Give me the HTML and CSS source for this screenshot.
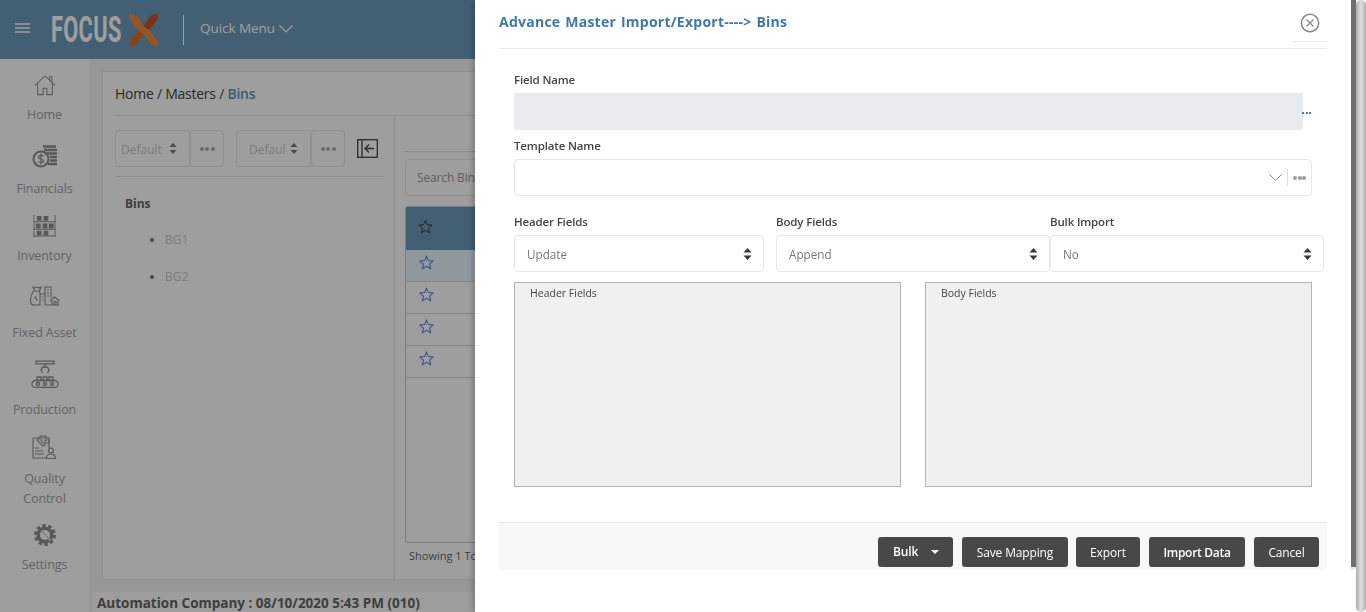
FILE: index.html
```html
<!DOCTYPE html>
<html lang="en">
<head>
<meta charset="utf-8">
<title>Advance Master Import/Export</title>
<link rel="stylesheet" href="styles.css">
</head>
<body>
<div class="app">
  <header class="topbar">
    <svg class="burger" width="15" height="10" viewBox="0 0 15 10"><path d="M0 1h15M0 5h15M0 9h15" stroke="#fff" stroke-width="1.500"/></svg>
    <div class="logo">
      <span class="logo-text">FOCUS</span>
      <svg width="29" height="34" viewBox="0 0 29 34"><path d="M0 0l8 3 6.500 10L21 3l8-3v6l-9 11 9 11v6l-8-3-6.500-10L8 31l-8 3v-6l9-11L0 6z" fill="#f08a3c"/><path d="M21 3l8-3v6l-9 11-5.500-4z" fill="#c0522c"/><path d="M8 31l-8 3v-6l9-11 5.500 4z" fill="#d2702f"/></svg>
    </div>
    <span class="top-sep"></span>
    <span class="quick">Quick Menu</span>
    <svg class="quick-chev" width="14" height="8" viewBox="0 0 14 8"><path d="M.5.500L7 7l6.500-6.500" fill="none" stroke="#fff" stroke-width="1.200"/></svg>
  </header>
  <div class="workspace">
    <nav class="sidenav">
      <a class="nav-item">
        <svg class="nav-icon" width="22" height="22" viewBox="0 0 24 23" fill="none" stroke="currentColor" stroke-width="1.100"><path d="M1 12L12 1.500 23 12M4 9.500V22h6v-7h4v7h6V9.500M17 6V2.500h2.500v6"/></svg>
        <span>Home</span>
      </a>
      <a class="nav-item gap-10">
        <svg class="nav-icon" width="26" height="23" viewBox="0 0 26 23" fill="none" stroke="currentColor"><circle cx="9" cy="14" r="7.500" stroke-width="2"/><path d="M11.500 11.500c-1-1.500-5-1.500-5 .7 0 2.500 5 1.300 5 3.700 0 2.200-4 2.200-5 .6M9 8.500v11" stroke-width="1.300"/><path d="M11 1.500h13M12 5h13M14 8.500h11M18 12h7M18 15.500h7M16 19h9" stroke-width="2.300"/></svg>
        <span>Financials</span>
      </a>
      <a class="nav-item">
        <svg class="nav-icon" width="23" height="22" viewBox="0 0 24 23" fill="currentColor"><path d="M.5 0h1v23h-1zM22.500 0h1v23h-1zM1 6.500h22v1H1zM1 14.500h22v1H1zM1 21.500h22v1H1z"/><path d="M4 1h5v5H4zM11 1h5v5h-5zM3 9h5v5H3zM10 9h5v5h-5zM16.500 9h5v5h-5zM4 16.500h5v5H4zM11 16.500h5v5h-5z"/></svg>
        <span>Inventory</span>
      </a>
      <a class="nav-item gap-16">
        <svg class="nav-icon" width="30" height="20" viewBox="0 0 30 20" fill="none" stroke="currentColor" stroke-width="1.100"><path d="M3 1l2 1 2-1 2 1 2-1-1.500 4h-5zM3.500 5C1.500 8 .5 12 .5 15c0 3 2 4 4 4H10V8L9.500 5M10 19V8h5v11M15 19V1h6v11M12 11h1.500M12 14h1.500M17 4h2M17 7h2M17 10h2M20 15l4.500-4 5 4M22 15v4h6v-4M24 15.500h2v3.500h-2zM15 19h14M6 10.500c-1.500 0-1.500 2 0 2s1.500 2 0 2"/></svg>
        <span>Fixed Asset</span>
      </a>
      <a class="nav-item gap-11">
        <svg class="nav-icon" width="28" height="28" viewBox="0 0 28 28" fill="none" stroke="currentColor" stroke-width="1.300"><path d="M5 1.200h18v2.600H5zM14 4v3M11.500 7h5M11.500 7l-1.500 3 1.500 3M16.500 7l1.500 3-1.500 3"/><path d="M6 17h4v3.500H6zM12 17h4v3.500h-4zM18 17h4v3.500h-4z"/><rect x="1" y="20.500" width="26" height="7" rx="3.500"/><circle cx="7" cy="24" r="1.500"/><circle cx="14" cy="24" r="1.500"/><circle cx="21" cy="24" r="1.500"/></svg>
        <span>Production</span>
      </a>
      <a class="nav-item">
        <svg class="nav-icon" width="25" height="25" viewBox="0 0 25 25" fill="none" stroke="currentColor" stroke-width="1.100"><path d="M5 3h3V1h6v2h3v10M8 3h6M1 3h4M1 3v20h14"/><path d="M3 16h8M3 19h9M3 13h4M5 5l6 6 2-1-6-7z"/><path d="M13 5h4v3h-4z"/><circle cx="19" cy="15.500" r="2.500"/><path d="M14.500 23.500c0-3 2-4.500 4.500-4.500s4.500 1.500 4.500 4.500z"/></svg>
        <span>Quality<br>Control</span>
      </a>
      <a class="nav-item">
        <svg class="nav-icon" width="22" height="22" viewBox="0 0 22 22" fill="none" stroke="currentColor"><circle cx="11" cy="11" r="9.500" stroke-width="3" stroke-dasharray="3.400 2.570"/><circle cx="11" cy="11" r="6.800" stroke-width="3.600"/><path d="M7.500 6.500l9 10" stroke="#fff" stroke-width="2"/><path d="M7.500 6.500l9 10" stroke-width=".8"/></svg>
        <span>Settings</span>
      </a>
    </nav>
    <main class="main">
      <section class="card">
        <div class="crumbs">Home / Masters / <b class="crumb-now">Bins</b></div>
        <div class="split">
          <aside class="tree-pane">
            <div class="tree-tools">
              <div class="tool-select wide"><span>Default</span><svg width="8" height="11" viewBox="0 0 8 11"><path d="M4 0l3.500 4H.5zM4 11L.5 7h7z" fill="#7a7a7a"/></svg></div>
              <div class="tool-dots"><i></i><i></i><i></i></div>
              <div class="tool-select second"><span>Defaul</span><svg width="8" height="11" viewBox="0 0 8 11"><path d="M4 0l3.500 4H.5zM4 11L.5 7h7z" fill="#7a7a7a"/></svg></div>
              <div class="tool-dots"><i></i><i></i><i></i></div>
              <svg class="collapse" width="21" height="19" viewBox="0 0 21 19" fill="none" stroke="#444" stroke-width="1.300"><rect x=".7" y=".7" width="19.600" height="17.600"/><path d="M5 1v17"/><path d="M17 9.500H8M12 5.500l-4 4 4 4"/></svg>
            </div>
            <h3 class="tree-title">Bins</h3>
            <ul class="tree-list"><li>BG1</li><li>BG2</li></ul>
          </aside>
          <div class="list-pane">
            <div class="search">Search Bins</div>
            <div class="grid">
              <div class="grid-head"><svg width="15" height="15" viewBox="0 0 24 24"><path d="M12 2l3 7 7.500.7-5.700 5 1.700 7.300-6.500-3.900L5.500 22l1.700-7.300-5.700-5L9 9z" fill="none" stroke="#333" stroke-width="1.500"/></svg></div>
              <div class="grid-row selected"><svg width="15" height="15" viewBox="0 0 24 24"><path d="M12 2l3 7 7.500.7-5.700 5 1.700 7.300-6.500-3.900L5.500 22l1.700-7.300-5.700-5L9 9z" fill="none" stroke="#5d80e8" stroke-width="1.700"/></svg></div>
              <div class="grid-row"><svg width="15" height="15" viewBox="0 0 24 24"><path d="M12 2l3 7 7.500.7-5.700 5 1.700 7.300-6.500-3.900L5.500 22l1.700-7.300-5.700-5L9 9z" fill="none" stroke="#5d80e8" stroke-width="1.700"/></svg></div>
              <div class="grid-row"><svg width="15" height="15" viewBox="0 0 24 24"><path d="M12 2l3 7 7.500.7-5.700 5 1.700 7.300-6.500-3.900L5.500 22l1.700-7.300-5.700-5L9 9z" fill="none" stroke="#5d80e8" stroke-width="1.700"/></svg></div>
              <div class="grid-row"><svg width="15" height="15" viewBox="0 0 24 24"><path d="M12 2l3 7 7.500.7-5.700 5 1.700 7.300-6.500-3.900L5.500 22l1.700-7.300-5.700-5L9 9z" fill="none" stroke="#5d80e8" stroke-width="1.700"/></svg></div>
            </div>
            <div class="showing">Showing 1 To 4 of 4</div>
          </div>
        </div>
      </section>
      <footer class="status">Automation Company : 08/10/2020 5:43 PM (010)</footer>
    </main>
  </div>
</div>

<div class="backdrop"></div>

<aside class="modal">
  <div class="modal-content">
    <div class="modal-head">
      <h2 class="modal-title">Advance Master Import/Export----&gt; Bins</h2>
      <div class="modal-close">
        <svg width="20" height="20" viewBox="0 0 20 20" fill="none" stroke="#8a8a8a"><circle cx="10" cy="10" r="8.700" stroke-width="1.500"/><path d="M6.500 6.500l7 7M13.500 6.500l-7 7" stroke-width="1.300"/></svg>
      </div>
    </div>
    <div class="modal-body">
      <label class="f-label">Field Name</label>
      <div class="field-row"><div class="field-disabled"></div><span class="field-more"><i></i><i></i><i></i></span></div>
      <label class="f-label template-label">Template Name</label>
      <div class="combo">
        <svg width="13" height="7" viewBox="0 0 13 7"><path d="M.5.500l6 6 6-6" fill="none" stroke="#8a8a8a"/></svg>
        <span class="combo-sep"></span>
        <span class="combo-dots"><i></i><i></i><i></i></span>
      </div>
      <div class="selects">
        <div class="sel-col first">
          <label class="f-label">Header Fields</label>
          <div class="select"><span>Update</span><svg width="9" height="12" viewBox="0 0 9 12"><path d="M4.500 0L8.500 4.500H.5zM4.500 12L.5 7.500h8z" fill="#343a40"/></svg></div>
        </div>
        <div class="sel-col">
          <label class="f-label">Body Fields</label>
          <div class="select"><span>Append</span><svg width="9" height="12" viewBox="0 0 9 12"><path d="M4.500 0L8.500 4.500H.5zM4.500 12L.5 7.500h8z" fill="#343a40"/></svg></div>
        </div>
        <div class="sel-col">
          <label class="f-label">Bulk Import</label>
          <div class="select"><span>No</span><svg width="9" height="12" viewBox="0 0 9 12"><path d="M4.500 0L8.500 4.500H.5zM4.500 12L.5 7.500h8z" fill="#343a40"/></svg></div>
        </div>
      </div>
      <div class="field-boxes">
        <div class="field-box header-box">Header Fields</div>
        <div class="field-box body-box">Body Fields</div>
      </div>
    </div>
    <div class="modal-foot">
      <button class="btn btn-bulk"><span>Bulk</span><i class="caret"></i></button>
      <button class="btn save">Save Mapping</button>
      <button class="btn export">Export</button>
      <button class="btn import">Import Data</button>
      <button class="btn cancel">Cancel</button>
    </div>
  </div>
  <div class="inner-scroll"><div class="inner-thumb"></div><div class="inner-rest"></div></div>
  <div class="page-scroll"></div>
</aside>
</body>
</html>
```
FILE: styles.css
```css
* { box-sizing: border-box; }
html, body { margin: 0; height: 100%; overflow: hidden; }
body { font-family: "Open Sans", "Noto Sans", sans-serif; font-size: 12px; color: #444; background: #f7f7f7; }

.app { height: 612px; display: grid; grid-template-rows: 59px 1fr; }

/* top bar */
.topbar { background: #6c9abb; display: flex; align-items: center; color: #fff; }
.burger { margin: -4px 0 0 15px; }
.logo { display: flex; align-items: center; margin-left: 21px; width: 121px; height: 34px; margin-top: 1px; }
.logo-text { font: 700 37px/34px Roboto, sans-serif; color: #fff; display: inline-block; width: 78px; flex: none; transform: scaleX(.59); transform-origin: left center; letter-spacing: .5px; white-space: nowrap; }
.top-sep { width: 1px; height: 30px; background: #fff; margin-left: 11px; }
.quick { font-size: 13.500px; margin: -3px 0 0 16px; letter-spacing: -.05px; }
.quick-chev { margin: -2px 0 0 4px; }

/* left nav */
.workspace { display: grid; grid-template-columns: 90px 1fr; min-height: 0; }
.sidenav { background: #fff; display: grid; grid-template-rows: 66px 74px 67px 77px 77px 89px 66px; align-content: start; text-align: center; font-size: 12.500px; letter-spacing: -.1px; line-height: 20px; border-right: 1px solid #f0f0f0; }
.nav-item { display: flex; flex-direction: column; align-items: center; justify-content: flex-end; color: #a0a0a0; }
.nav-icon { color: #8e8e8e; margin-bottom: 9px; }
.gap-10 .nav-icon { margin-bottom: 11px; }
.gap-11 .nav-icon { margin-bottom: 12px; }
.gap-16 .nav-icon { margin-bottom: 17px; }

/* main area */
.main { display: grid; grid-template-rows: 509px 1fr; padding: 12px 0 0 12px; background: #f4f4f4; min-width: 0; }
.card { background: #fff; border: 1px solid #e9e9e9; border-right: 0; display: flex; flex-direction: column; min-height: 0; }
.crumbs { height: 44px; margin-left: 12px; padding-top: 12px; font-size: 14px; line-height: 20px; letter-spacing: -.25px; color: #444; border-bottom: 1px solid #e2e2e2; }
.crumb-now { color: #5d8fb3; font-weight: 600; }
.split { flex: 1; display: flex; min-height: 0; }
.tree-pane { width: 292px; border-right: 1px solid #e2e2e2; padding: 14px 10px 0 12px; }
.tree-tools { display: flex; align-items: center; height: 37px; }
.tool-select { height: 37px; border: 1px solid #e8e8e8; border-radius: 4px 0 0 4px; display: flex; align-items: center; justify-content: space-between; padding: 0 12px 0 5px; color: #c8c8c8; }
.tool-select span { margin-top: 1px; }
.tool-select.wide { width: 75px; }
.tool-select.second { width: 75px; margin-left: 12px; padding-left: 12px; }
.tool-dots { width: 34px; height: 37px; border: 1px solid #e8e8e8; border-radius: 4px; display: flex; align-items: center; justify-content: center; gap: 1.500px; }
.tool-dots i { width: 4px; height: 4px; border-radius: 50%; background: #a9a9a9; }
.collapse { margin-left: 12px; }
.tree-title { margin: 9px 0 0; padding: 18px 0 0 10px; border-top: 1px solid #e2e2e2; font-size: 12px; line-height: 18px; font-weight: 700; color: #666; }
.tree-list { margin: 17px 0 0; padding: 0 0 0 50px; color: #c8c8c8; line-height: 19px; }
.tree-list li { margin-bottom: 18px; }
.tree-list li::marker { color: #777; }
.list-pane { flex: 1; min-width: 0; padding: 36px 10px 0 10px; position: relative; }
.list-pane::before { content: ""; position: absolute; left: 10px; right: 10px; top: 35px; border-top: 1px solid #e2e2e2; }
.search { height: 37px; margin-top: 7px; border: 1px solid #e8e8e8; border-radius: 4px; padding: 0 11px; line-height: 35px; color: #999; letter-spacing: -.15px; }
.grid { height: 337px; margin-top: 10px; border: 1px solid #c8c8c8; border-radius: 3px; }
.grid-head { height: 43px; background: #6c9abb; padding: 0 0 4px 12px; display: flex; align-items: center; }
.grid-row { height: 32px; padding: 0 0 7px 13px; display: flex; align-items: center; border-bottom: 1px solid #d8d8d8; }
.grid-row.selected { background: #e9f6ff; }
.showing { margin-top: 4px; padding-left: 4px; line-height: 18px; color: #666; font-size: 11px; }
.status { background: #fdfdfd; margin: 12px 0 0 -9px; padding: 2px 0 0 4px; font-size: 13.500px; line-height: 19px; font-weight: 700; color: #666; white-space: nowrap; }

.backdrop { position: fixed; inset: 0; background: rgba(0, 0, 0, .38); }

/* modal panel */
.modal { position: fixed; top: 0; right: 0; bottom: 0; width: 891px; display: flex; background: #fff; box-shadow: -2px 0 6px rgba(0, 0, 0, .25); }
.modal-content { width: 876px; padding: 0 24px; flex: none; }
.modal-head { height: 49px; border-bottom: 1px solid #e9ecef; display: flex; justify-content: space-between; align-items: flex-start; }
.modal-title { margin: 12px 0 0; font-size: 14px; line-height: 19px; font-weight: 700; letter-spacing: .25px; word-spacing: 1px; color: #3f79a5; }
.modal-close { width: 34px; height: 42px; padding: 13px 0 0 7px; border-bottom: 1px solid #e9ecef; }
.modal-close svg { display: block; }
.modal-body { padding: 22px 0 0 15px; height: 473px; }
.f-label { display: block; height: 18px; line-height: 18px; margin-bottom: 4px; font-size: 11.500px; letter-spacing: -.15px; font-weight: 600; color: #444; }
.field-row { display: flex; height: 37px; }
.field-disabled { width: 789px; height: 37px; background: #e9ecef; border-radius: 3px 0 0 3px; }
.field-more { display: flex; gap: 1.500px; margin: 19px 0 0 -1px; }
.field-more i { width: 2px; height: 2px; background: #4f7fa8; }
.template-label { margin-top: 7px; }
.combo { width: 798px; height: 37px; border: 1px solid #e6e8ef; border-radius: 4px; display: flex; align-items: center; justify-content: flex-end; }
.combo-sep { width: 1px; height: 17px; background: #dedede; margin: 0 5px 0 5px; }
.combo-dots { display: flex; gap: .5px; margin-right: 5px; }
.combo-dots i { width: 4px; height: 4px; border-radius: 50%; background: #9a9a9a; }
.selects { display: grid; grid-template-columns: 262px 274px 274px; margin-top: 17px; }
.sel-col.first .select { width: 250px; }
.select { height: 37px; border: 1px solid #e6e8ef; border-radius: 4px; display: flex; align-items: center; justify-content: space-between; padding: 0 12px 0 12px; color: #777; font-size: 11.700px; }
.select span { margin-top: 1px; }
.select svg { margin-right: -1px; }
.field-boxes { display: flex; gap: 24px; margin-top: 10px; }
.field-box { width: 387px; height: 205px; background: #f0f0f0; border: 1px solid #b5b5b5; font-size: 10.500px; line-height: 20px; color: #444; }
.header-box { padding-left: 15px; }
.body-box { padding-left: 15px; }
.modal-foot { height: 48px; border-top: 1px solid #e3e3e3; background: #f8f8f8; border-radius: 0 0 4px 4px; display: flex; justify-content: flex-end; align-items: flex-start; padding: 14px 8px 0 0; gap: 9px; }
.btn { height: 30px; border: 0; border-radius: 3px; background: #484848; color: #fff; font: 12px/32px "Open Sans", "Noto Sans", sans-serif; padding: 0; letter-spacing: -.15px; }
.btn-bulk { width: 75px; font-weight: 600; display: flex; align-items: center; padding-left: 15px; }
.caret { margin-left: 13px; border-top: 4px solid #fff; border-left: 4px solid transparent; border-right: 4px solid transparent; }
.save { width: 106px; margin-right: -1px; }
.export { width: 64px; }
.import { width: 96px; font-weight: 600; letter-spacing: -.3px; }
.cancel { width: 65px; }

/* scrollbars */
.inner-scroll { width: 5px; display: flex; flex-direction: column; flex: none; }
.inner-thumb { height: 567px; background: #6f6f6f; }
.inner-rest { height: 3px; background: linear-gradient(90deg, #e0e0e0, #f2f2f2); border-radius: 0 0 2px 2px; }
.page-scroll { width: 10px; flex: none; height: 612px; border-radius: 5px; background: linear-gradient(90deg, #aaa, #dcdcdc 45%, #d2d2d2 70%, #a8a8a8); }
```
